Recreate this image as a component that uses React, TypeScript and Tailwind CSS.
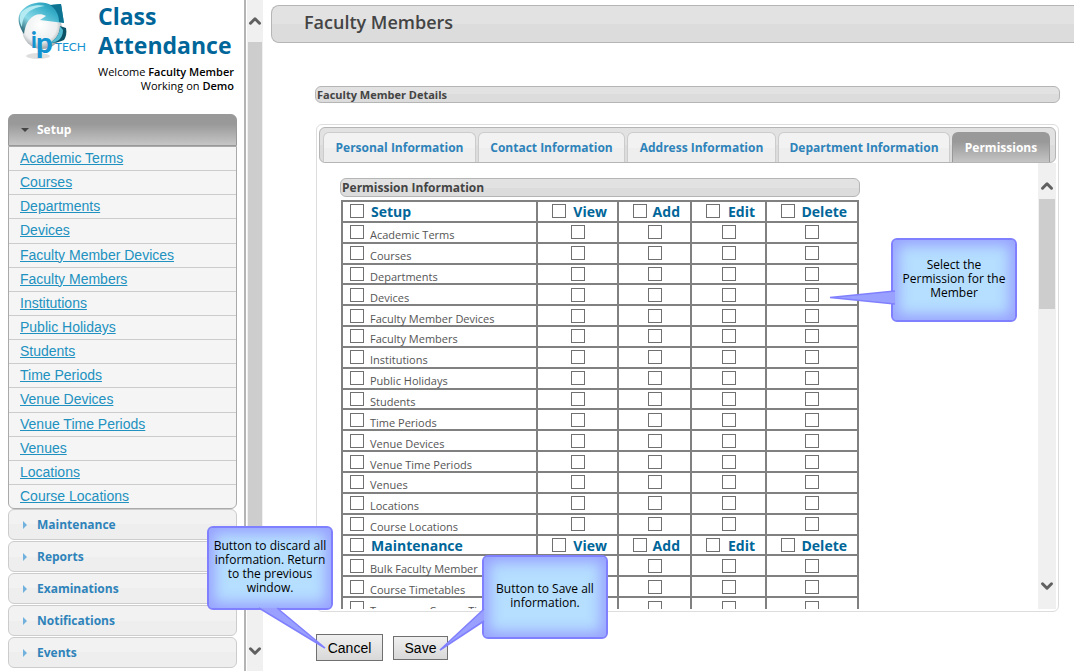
import React from 'react'
import { ChevronDown, ChevronUp } from 'lucide-react'

const setupLinks = [
  'Academic Terms',
  'Courses',
  'Departments',
  'Devices',
  'Faculty Member Devices',
  'Faculty Members',
  'Institutions',
  'Public Holidays',
  'Students',
  'Time Periods',
  'Venue Devices',
  'Venue Time Periods',
  'Venues',
  'Locations',
  'Course Locations',
]

const closedSections = ['Maintenance', 'Reports', 'Examinations', 'Notifications', 'Events']

const tabs = [
  { name: 'Personal Information', width: 'w-[153px]' },
  { name: 'Contact Information', width: 'w-[147px]' },
  { name: 'Address Information', width: 'w-[149px]' },
  { name: 'Department Information', width: 'w-[172px]' },
  { name: 'Permissions', width: 'w-[98px]', active: true },
]

const actions = ['View', 'Add', 'Edit', 'Delete']

const permissionGroups = [
  { name: 'Setup', items: setupLinks },
  { name: 'Maintenance', items: ['Bulk Faculty Member', 'Course Timetables', 'Temporary Course Timetables'] },
]

const barStyle = 'border border-[#b5b5b5] bg-linear-to-b from-[#e2e2e2] from-50% to-[#dcdcdc] to-50% text-[#444]'

export default function App() {
  return (
    <div className="relative flex h-screen min-h-[671px] overflow-hidden bg-white font-['Open_Sans',sans-serif]">
      <Sidebar />
      <ScrollTrack className="w-4 pt-3 pb-[11px]" thumb="top-[42px] h-[520px]" />
      <main className="flex min-w-0 flex-1 flex-col pt-[5px]">
        <header className={`ml-2 flex h-[38px] items-center rounded-l-lg border-r-0 pl-8 ${barStyle}`}>
          <h1 className="pb-1 text-lg font-semibold">Faculty Members</h1>
        </header>
        <div className="mt-[43px] mr-3.5 ml-[52px] flex min-h-0 flex-1 flex-col">
          <h2 className={`flex h-[17px] items-center rounded-md pl-px text-[11px] leading-4 font-bold ${barStyle}`}>
            Faculty Member Details
          </h2>
          <div className="mx-px mt-[21px] flex min-h-0 flex-1 flex-col rounded-md border border-[#ddd] p-0.5">
            <TabBar />
            <div className="flex min-h-0 flex-1">
              <div className="min-w-0 flex-1 overflow-hidden pt-[15px] pl-[21px]">
                <PermissionTable />
              </div>
              <ScrollTrack className="w-[18px] pt-3.5 pb-3.5" thumb="top-9 h-[110px]" />
            </div>
          </div>
          <div className="mx-px mt-[22px] mb-2.5 flex items-center gap-2.5">
            <button className="h-[27px] w-[67px] border border-[#707070] bg-linear-to-b from-[#f0f0f0] to-[#d8d8d8] font-['Liberation_Sans',sans-serif] text-[14px] leading-5">
              Cancel
            </button>
            <button className="h-6 w-[55px] border border-[#707070] bg-linear-to-b from-[#f0f0f0] to-[#d8d8d8] font-['Liberation_Sans',sans-serif] text-[14px] leading-5">
              Save
            </button>
          </div>
        </div>
      </main>

      <Callout className="top-[238px] left-[891px]" tail="M4 53 L-61 59.5 L4 66">
        Select the Permission for the Member
      </Callout>
      <Callout className="top-[526px] left-[207px]" tail="M52 82 L118 122 L70 82">
        Button to discard all information. Return to the previous window.
      </Callout>
      <Callout className="top-[555px] left-[482px]" tail="M2 54 L-42 95 L2 66">
        Button to Save all information.
      </Callout>
    </div>
  )
}

function Sidebar() {
  return (
    <aside className="mr-px w-[246px] shrink-0 border-r-2 border-[#b4b4b4] pl-2">
      <div className="flex h-[62px] pr-2">
        <Logo className="ml-2 h-[62px] w-[74px] shrink-0" />
        <div className="ml-2 pt-0.5 text-[23px] leading-[29px] font-bold text-[#069]">Class Attendance</div>
      </div>
      <p className="pt-[3px] pr-2.5 text-right text-[11px] leading-[14px] text-black">
        Welcome <b className="font-semibold">Faculty Member</b>
        <br />
        Working on <b className="font-semibold">Demo</b>
      </p>
      <nav className="mt-[21px] mr-[7px]">
        <button className="flex h-8 w-full items-center rounded-t-md border border-[#999] bg-linear-to-b from-[#999] from-30% to-[#c6c6c6] pl-3 text-[12px] font-bold text-white">
          <svg className="mr-1.5 h-4 w-[10px]" viewBox="0 0 10 16">
            <path d="M0 6h8L4 10z" fill="#454545" />
          </svg>
          Setup
        </button>
        <ul className="flex h-[363px] flex-col rounded-b-md border border-[#aaa] bg-[#f5f5f5]">
          {setupLinks.map((name) => (
            <li key={name} className="flex flex-1 items-center border-b border-[#ccc] pb-px pl-[11px] last:border-b-0">
              <a
                href="#"
                className="font-['Liberation_Sans',sans-serif] text-[14px] leading-5 text-[#2191c0] underline"
              >
                {name}
              </a>
            </li>
          ))}
        </ul>
        <div className="flex flex-col gap-px">
          {closedSections.map((name) => (
            <button
              key={name}
              className="flex h-[31px] items-center rounded-md border border-[#ccc] bg-linear-to-b from-[#f2f2f2] from-50% to-[#eeeeee] to-50% pl-3 text-[12px] font-bold text-[#2e83ba]"
            >
              <svg className="mr-1.5 h-4 w-[10px]" viewBox="0 0 10 16">
                <path d="M2 4l4 4-4 4z" fill="#72b1de" />
              </svg>
              {name}
            </button>
          ))}
        </div>
      </nav>
    </aside>
  )
}

function TabBar() {
  return (
    <div className={`flex h-9 shrink-0 items-end gap-0.5 rounded-md pl-[3px] ${barStyle}`} role="tablist">
      {tabs.map((tab) => (
        <button
          key={tab.name}
          role="tab"
          aria-selected={!!tab.active}
          className={`h-[30px] rounded-t-md border border-b-0 text-[12px] leading-5 font-bold whitespace-nowrap ${tab.width} ${
            tab.active
              ? 'border-[#999] bg-linear-to-b from-[#999] from-30% to-[#c4c4c4] text-white'
              : 'border-[#ccc] bg-linear-to-b from-[#f2f2f2] from-50% to-[#eeeeee] to-50% text-[#2e83ba]'
          }`}
        >
          {tab.name}
        </button>
      ))}
    </div>
  )
}

function PermissionTable() {
  return (
    <div className="w-[520px]">
      <h3 className={`flex h-[19px] items-center rounded-md pl-px text-[12px] leading-4 font-bold ${barStyle}`}>
        Permission Information
      </h3>
      <table className="mt-[3px] ml-px h-[419px] w-[518px] table-fixed border-collapse border-2 border-[#808080]">
        <colgroup>
          <col className="w-[195px]" />
          <col className="w-[81px]" />
          <col className="w-[73px]" />
          <col className="w-[75px]" />
          <col className="w-[92px]" />
        </colgroup>
        {permissionGroups.map((group) => (
          <tbody key={group.name}>
            <tr>
              <th className="border-2 border-[#808080] p-0">
                <label className="flex h-[18px] items-start gap-[7px] pl-[7px] text-[14px] leading-5 font-bold text-[#069]">
                  <Checkbox />
                  {group.name}
                </label>
              </th>
              {actions.map((action) => (
                <th key={action} className="border-2 border-[#808080] p-0">
                  <label className="flex h-[18px] items-start justify-between pr-2.5 pl-3.5 text-[14px] leading-5 font-bold text-[#069]">
                    <Checkbox />
                    {action}
                  </label>
                </th>
              ))}
            </tr>
            {group.items.map((item) => (
              <tr key={item}>
                <td className="border-2 border-[#808080] p-0">
                  <label className="flex h-[18px] items-start gap-1.5 pl-[7px] text-[11px] leading-6 whitespace-nowrap text-[#555]">
                    <Checkbox />
                    {item}
                  </label>
                </td>
                {actions.map((action) => (
                  <td key={action} className="border-2 border-[#808080] p-0">
                    <div className="flex h-[18px] justify-center">
                      <Checkbox label={`${item} ${action}`} />
                    </div>
                  </td>
                ))}
              </tr>
            ))}
          </tbody>
        ))}
      </table>
    </div>
  )
}

function Checkbox({ label }: { label?: string }) {
  return (
    <input
      type="checkbox"
      aria-label={label}
      className="mt-0.5 h-3.5 w-3.5 shrink-0 appearance-none border border-[#707070] bg-white checked:bg-[#707070]"
    />
  )
}

function ScrollTrack({ className, thumb }: { className: string; thumb: string }) {
  return (
    <div className={`relative flex shrink-0 flex-col items-center justify-between bg-[#f0f0f0] ${className}`}>
      <ChevronUp size={18} strokeWidth={4} color="#606060" />
      <ChevronDown size={18} strokeWidth={4} color="#606060" />
      <div className={`absolute inset-x-px bg-[#cdcdcd] ${thumb}`} />
    </div>
  )
}

function Callout({ className, tail, children }: { className: string; tail: string; children: React.ReactNode }) {
  return (
    <div
      className={`absolute flex h-[84px] w-[126px] items-center justify-center rounded-md border-2 border-[#8080ff] bg-[#b5deff] text-center shadow-[inset_0_0_14px_5px_#97a0ff] ${className}`}
    >
      <svg className="absolute -top-0.5 -left-0.5 overflow-visible" width="126" height="84">
        <path d={tail} fill="#99a0ff" stroke="#8080ff" strokeWidth="1.5" />
      </svg>
      <p className="relative px-0.5 pb-0.5 text-[12px] leading-[14px] text-black">{children}</p>
    </div>
  )
}

function Logo({ className }: { className: string }) {
  return (
    <svg className={className} viewBox="16 0 74 62">
      <defs>
        <radialGradient id="globe" cx="0.45" cy="0.4" r="0.6">
          <stop offset="0" stopColor="#ffffff" />
          <stop offset="0.7" stopColor="#eceeef" />
          <stop offset="1" stopColor="#9fa6aa" />
        </radialGradient>
        <linearGradient id="swoosh" x1="0" y1="1" x2="1" y2="0">
          <stop offset="0" stopColor="#0d4456" />
          <stop offset="0.35" stopColor="#8edbe8" />
          <stop offset="0.7" stopColor="#3bb0ca" />
          <stop offset="1" stopColor="#0f7f9f" />
        </linearGradient>
      </defs>
      <ellipse cx="38" cy="56" rx="12" ry="3" fill="#dedede" />
      <circle cx="42" cy="29" r="20" fill="url(#globe)" />
      <path d="M24 34c-5-7-7-15-4-21 3-5 9-9 16-10 7-1 11 0 15 2l10-1 3 19-24-3 6-4c-5-3-12-2-16 3-4 4-5 9-6 15z" fill="url(#swoosh)" />
      <path d="M22 12c5-5 14-8 23-6-9 1-16 4-20 10-2 3-3 7-3 11-3-5-3-11 0-15z" fill="#b4ebf3" />
      <path d="M50 5l11-1 3 19-5-1c0-7-3-13-9-17z" fill="#0d7391" />
      <path d="M60 26l6 2c1 5 0 9-2 12-4 2-9 3-14 3 6-4 10-9 10-17z" fill="#0b5266" />
      <path d="M60 26l3 4c0 5-2 8-4 10-3 2-6 3-9 3 6-4 10-9 10-17z" fill="#53bcd2" />
      <text x="31" y="48" fontFamily="Lato" fontSize="22" fontWeight="900" fill="#1493d1">
        i
      </text>
      <text x="36" y="53" fontFamily="Lato" fontSize="29" fontWeight="900" fill="#1493d1">
        p
      </text>
      <text x="55" y="51" fontFamily="Lato" fontSize="12" fill="#1493d1">
        TECH
      </text>
    </svg>
  )
}
